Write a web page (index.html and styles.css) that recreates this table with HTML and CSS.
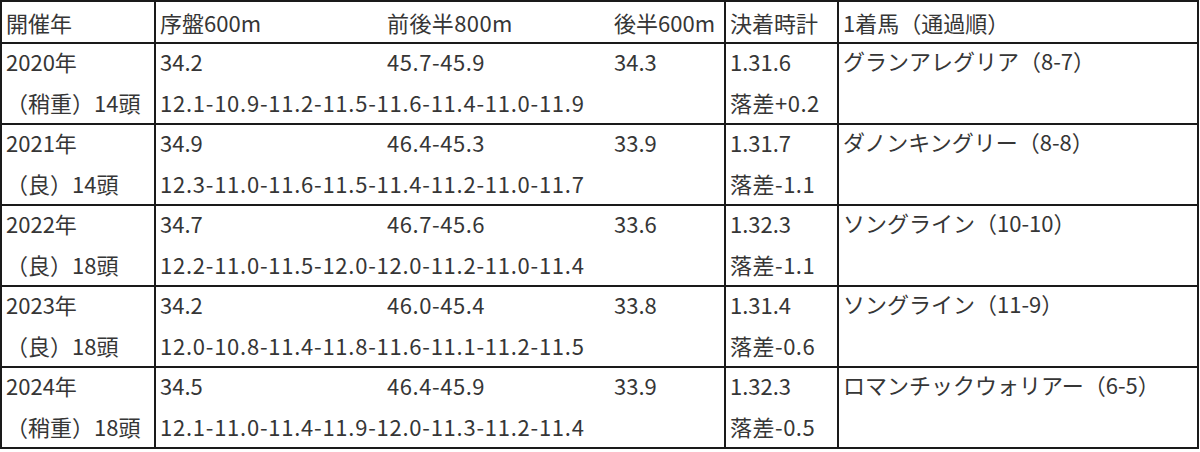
FILE: index.html
```html
<!DOCTYPE html>
<html lang="ja">
<head>
<meta charset="utf-8">
<title>レース比較表</title>
<link rel="stylesheet" href="styles.css">
</head>
<body>
<table class="t">
  <colgroup>
    <col class="c1"><col class="c2"><col class="c3"><col class="c4"><col class="c5"><col class="c6">
  </colgroup>
  <tr class="hd">
    <th>開催年</th>
    <th class="nr">序盤600m</th>
    <th class="nl nr wide">前後半800m</th>
    <th class="nl">後半600m</th>
    <th>決着時計</th>
    <th>1着馬（通過順）</th>
  </tr>

  <tr class="l1">
    <td>2020年</td><td class="nr">34.2</td><td class="nl nr mid">45.7-45.9</td><td class="nl">34.3</td><td>1.31.6</td>
    <td rowspan="2" class="horse">グランアレグリア（8-7）</td>
  </tr>
  <tr class="l2">
    <td>（稍重）14頭</td><td colspan="3" class="laps">12.1-10.9-11.2-11.5-11.6-11.4-11.0-11.9</td><td class="diff">落差+0.2</td>
  </tr>

  <tr class="l1">
    <td>2021年</td><td class="nr">34.9</td><td class="nl nr mid">46.4-45.3</td><td class="nl">33.9</td><td>1.31.7</td>
    <td rowspan="2" class="horse">ダノンキングリー（8-8）</td>
  </tr>
  <tr class="l2">
    <td>（良）14頭</td><td colspan="3" class="laps">12.3-11.0-11.6-11.5-11.4-11.2-11.0-11.7</td><td class="diff">落差-1.1</td>
  </tr>

  <tr class="l1">
    <td>2022年</td><td class="nr">34.7</td><td class="nl nr mid">46.7-45.6</td><td class="nl">33.6</td><td>1.32.3</td>
    <td rowspan="2" class="horse">ソングライン（10-10）</td>
  </tr>
  <tr class="l2">
    <td>（良）18頭</td><td colspan="3" class="laps">12.2-11.0-11.5-12.0-12.0-11.2-11.0-11.4</td><td class="diff">落差-1.1</td>
  </tr>

  <tr class="l1">
    <td>2023年</td><td class="nr">34.2</td><td class="nl nr mid">46.0-45.4</td><td class="nl">33.8</td><td>1.31.4</td>
    <td rowspan="2" class="horse">ソングライン（11-9）</td>
  </tr>
  <tr class="l2">
    <td>（良）18頭</td><td colspan="3" class="laps">12.0-10.8-11.4-11.8-11.6-11.1-11.2-11.5</td><td class="diff">落差-0.6</td>
  </tr>

  <tr class="l1">
    <td>2024年</td><td class="nr">34.5</td><td class="nl nr mid">46.4-45.9</td><td class="nl">33.9</td><td>1.32.3</td>
    <td rowspan="2" class="horse">ロマンチックウォリアー（6-5）</td>
  </tr>
  <tr class="l2">
    <td>（稍重）18頭</td><td colspan="3" class="laps">12.1-11.0-11.4-11.9-12.0-11.3-11.2-11.4</td><td class="diff">落差-0.5</td>
  </tr>
</table>
</body>
</html>
```

FILE: styles.css
```css
html, body {
  margin: 0;
  padding: 0;
  background: #ffffff;
}

.t {
  border-collapse: collapse;
  table-layout: fixed;
  width: 1197px;
  font-family: "Noto Sans CJK JP", "Noto Sans", sans-serif;
  font-size: 22px;
  color: #363636;
}

.c1 { width: 154px; }
.c2 { width: 228px; }
.c3 { width: 227px; }
.c4 { width: 115px; }
.c5 { width: 113px; }
.c6 { width: 360px; }

.t th,
.t td {
  border: 2px solid #1a1a1a;
  padding: 0 0 0 4px;
  text-align: left;
  font-weight: 400;
  white-space: nowrap;
  line-height: 28px;
}

.hd th {
  vertical-align: middle;
  padding-top: 6px;
  padding-bottom: 6px;
}

.l1 td {
  vertical-align: top;
  padding-top: 3px;
  padding-bottom: 9px;
}

.l2 td {
  vertical-align: top;
  padding-top: 4px;
  padding-bottom: 7px;
}

.l1 td:not(.horse) { border-bottom: hidden; }

.t .nl { border-left: hidden; }
.t .nr { border-right: hidden; }

.t .horse {
  padding-top: 2px;
}

.laps { letter-spacing: 0.75px; }
.mid { letter-spacing: 0.55px; }
.diff { letter-spacing: 0.5px; }
.wide { letter-spacing: 0.4px; }
```
